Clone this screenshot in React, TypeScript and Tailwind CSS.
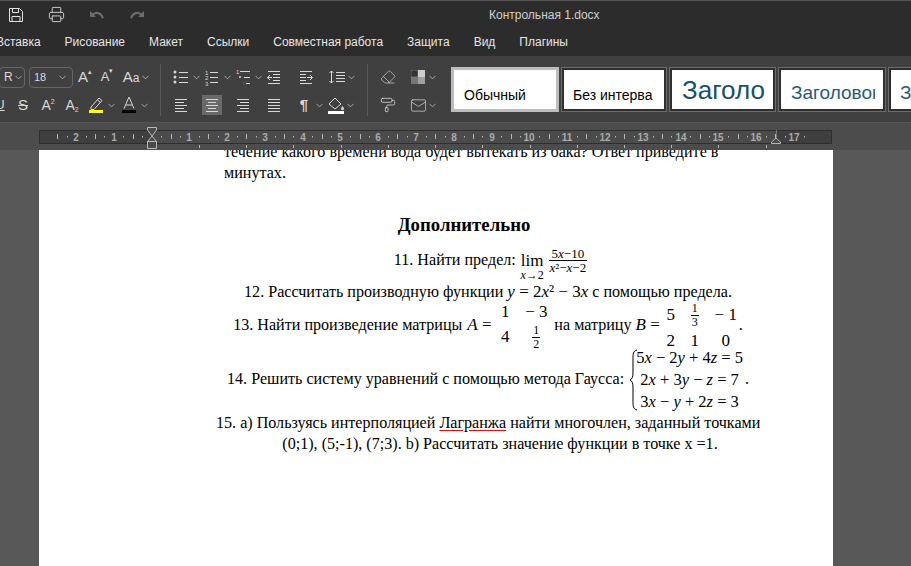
import { ReactNode } from 'react';
import { Printer, Eraser, PaintRoller, Mail, ChevronDown } from 'lucide-react';

const Chev = () => <ChevronDown size={11} strokeWidth={1.5} className="shrink-0 text-[#d0d0d0]" />;

function Ic({ children, w = 18 }: { children: ReactNode; w?: number }) {
  return (
    <svg width={w} height="18" viewBox={`0 0 ${w} 18`} fill="none" stroke="#d8d8d8" strokeWidth="1" className="shrink-0">
      {children}
    </svg>
  );
}

function Lines({ rows }: { rows: number[][] }) {
  return (
    <Ic>
      {rows.map((r, i) => (
        <path key={i} d={`M${r[0]} ${r[2]}.5H${r[1]}`} />
      ))}
    </Ic>
  );
}

const alignLeft = [[3, 15, 3], [3, 12, 6], [3, 15, 9], [3, 12, 12], [3, 15, 15]];
const alignCenter = [[3, 15, 3], [5, 13, 6], [3, 15, 9], [5, 13, 12], [3, 15, 15]];
const alignRight = [[3, 15, 3], [6, 15, 6], [3, 15, 9], [6, 15, 12], [3, 15, 15]];
const justify = [[3, 15, 3], [3, 15, 6], [3, 15, 9], [3, 15, 12], [3, 15, 15]];

function Cell({ w, children, active }: { w: number; children: ReactNode; active?: boolean }) {
  return (
    <div style={{ width: w }} className={`h-5 flex items-center justify-center shrink-0 ${active ? 'bg-[#6a6a6a]' : ''}`}>
      {children}
    </div>
  );
}

function StyleCard({ w, children, selected }: { w: number; children: ReactNode; selected?: boolean }) {
  return (
    <div
      style={{ width: w }}
      className={`h-[45px] shrink-0 bg-white overflow-hidden whitespace-nowrap ${selected ? 'border-[3px] border-[#bdbdbd]' : 'border-[3px] border-[#2f2f2f] outline outline-1 outline-[#6e6e6e] -outline-offset-1'}`}
    >
      {children}
    </div>
  );
}

function Ruler() {
  const nums: [number, string][] = [
    [76, '2'], [114, '1'], [189, '1'], [227, '2'], [265, '3'], [303, '4'], [340, '5'], [378, '6'], [416, '7'],
    [454, '8'], [492, '9'], [529, '10'], [567, '11'], [605, '12'], [643, '13'], [681, '14'], [718, '15'], [756, '16'], [794, '17'],
  ];
  const ticks: { x: number; long: boolean }[] = [];
  for (let i = -10; i < 70; i++) {
    const x = 151.7 + i * 9.45;
    if (x < 42 || x > 830) continue;
    const m = ((i % 4) + 4) % 4;
    if (m === 0) continue;
    ticks.push({ x, long: m === 2 });
  }
  const tabs = [199, 246, 293, 341, 388, 435, 482, 530, 577, 624, 671, 718, 766];
  return (
    <svg width="911" height="27" viewBox="0 0 911 27" className="block" fontFamily="'Liberation Sans', sans-serif">
      <rect x="39.5" y="7.5" width="792" height="13" fill="#3f3f3f" stroke="#2e2e2e" />
      <rect x="152" y="8" width="624" height="12" fill="#4b4b4b" />
      {ticks.map((t, i) => (
        <path key={i} d={`M${Math.round(t.x)}.5 ${t.long ? 11 : 13}V${t.long ? 16 : 14.5}`} stroke="#b8b8b8" />
      ))}
      {nums.map(([x, n]) => (
        <text key={x} x={x} y="17.5" textAnchor="middle" fontSize="10" fontWeight="700" fill="#aaaaaa">{n}</text>
      ))}
      {tabs.map((x) => (
        <path key={x} d={`M${x}.5 22V25`} stroke="#b8b8b8" />
      ))}
      <path d="M147.5 4.5H156.5V7L152 13L147.5 7ZM152 13L156.5 18.5H147.5Z" fill="#4b4b4b" stroke="#b8b8b8" />
      <rect x="147.5" y="18.5" width="9" height="7" fill="#4b4b4b" stroke="#b8b8b8" />
      <path d="M776 15L771.5 19V20.5H780.5V19Z" fill="#4b4b4b" stroke="#b8b8b8" />
      <path d="M776.5 7V15" stroke="#777" />
    </svg>
  );
}

function Frac({ a, b, size = 'text-[12px]' }: { a: ReactNode; b: ReactNode; size?: string }) {
  return (
    <span className={`inline-flex flex-col items-center align-middle leading-[13px] ${size}`}>
      <span className="px-px">{a}</span>
      <span className="border-t border-black px-px w-full text-center">{b}</span>
    </span>
  );
}

const I = ({ children }: { children: ReactNode }) => <i className="italic">{children}</i>;
const M = ({ children }: { children: ReactNode }) => <span className="text-[17px]">{children}</span>;

export default function App() {
  return (
    <div className="w-[911px] h-[566px] overflow-hidden bg-[#585858] flex flex-col font-['Liberation_Sans',sans-serif]">
      {/* title bar */}
      <div className="h-7 shrink-0 bg-[#2c2c2c] border-t border-[#555] flex items-center text-[#e0e0e0]">
        <svg width="14" height="14" viewBox="0 0 14 14" fill="none" stroke="#e0e0e0" className="ml-[9px] shrink-0">
          <path d="M.5.5H10.5L13.5 3.5V13.5H.5Z" />
          <path d="M3.5.5V4.5H9.5V.5M3 13.5V8.5H11V13.5" />
        </svg>
        <Printer size={17} strokeWidth={1.2} className="ml-[25px] shrink-0" />
        <svg width="16" height="12" viewBox="0 0 16 12" className="ml-[24px] shrink-0" fill="#6c6c6c">
          <path d="M1 2V8H7L4.8 6C7.5 4 11 5 13 9.5L15 9C13 3 8 1 3.5 4.3Z" />
        </svg>
        <svg width="16" height="12" viewBox="0 0 16 12" className="ml-[24px] shrink-0" fill="#6c6c6c">
          <path d="M15 2V8H9L11.2 6C8.5 4 5 5 3 9.5L1 9C3 3 8 1 12.5 4.3Z" />
        </svg>
        <span className="ml-[344px] text-[12px] text-[#cfcfcf]">Контрольная 1.docx</span>
      </div>
      {/* tabs */}
      <div className="h-7 shrink-0 bg-[#2c2c2c] flex items-center gap-6 -ml-[4px] text-[12px] text-[#e6e6e6] whitespace-nowrap">
        <span>Вставка</span>
        <span>Рисование</span>
        <span>Макет</span>
        <span>Ссылки</span>
        <span>Совместная работа</span>
        <span>Защита</span>
        <span>Вид</span>
        <span>Плагины</span>
      </div>
      {/* toolbar */}
      <div className="h-[67px] shrink-0 bg-[#404040] border-b border-[#555] flex items-start overflow-hidden text-[#d8d8d8]">
        <div className="w-[160px] shrink-0 mt-[11px] flex flex-col gap-2 h-12">
          <div className="flex items-center h-5">
            <div className="w-[26px] h-[21px] border border-[#666] rounded-sm -ml-px flex items-center pl-[4px] shrink-0 text-[12px] overflow-hidden">
              <span>R</span><Chev />
            </div>
            <div className="w-[44px] h-[21px] ml-[4px] border border-[#666] rounded-sm flex items-center justify-between pl-1 pr-1 text-[11px] shrink-0">
              <span>18</span><Chev />
            </div>
            <div className="ml-[1px] flex items-center">
              <Cell w={22}><span className="text-[15px]">A<sup className="text-[7px] -top-2 relative">▴</sup></span></Cell>
              <Cell w={22}><span className="text-[13px]">A<sup className="text-[7px] -top-2 relative">▾</sup></span></Cell>
              <span className="w-[3px]" />
              <Cell w={20}><span className="text-[15px]">A<span className="text-[12px]">a</span></span></Cell>
              <span className="-ml-[1px]"><Chev /></span>
            </div>
          </div>
          <div className="flex items-center h-5">
            <span className="-ml-[6px]"><Cell w={12}><span className="text-[13px] underline">U</span></Cell></span>
            <span className="w-[5px]" />
            <Cell w={24}><span className="text-[15px] line-through">S</span></Cell>
            <span className="w-[1px]" />
            <Cell w={24}><span className="text-[14px]">A<sup className="text-[7px] -top-1.5 relative">2</sup></span></Cell>
            <Cell w={24}><span className="text-[14px]">A<sub className="text-[7px] top-0.5 relative">2</sub></span></Cell>
            <Cell w={24}>
              <Ic>
                <path d="M4 11L12 2L15 4.5L7 13.5H4Z" />
                <path d="M10.5 4L13.5 6.5" />
                <rect x="2" y="14" width="14" height="3" fill="#ffff00" stroke="none" />
              </Ic>
            </Cell>
            <span className="-ml-[2px]"><Chev /></span>
            <span className="w-[1px]" />
            <Cell w={22}>
              <Ic>
                <path d="M4 12.5L9 1L14 12.5M6 9H12" />
                <rect x="2" y="14" width="14" height="3" fill="#000" stroke="none" />
              </Ic>
            </Cell>
            <span className="-ml-[1px]"><Chev /></span>
          </div>
        </div>
        <div className="w-px h-[52px] mt-[8px] bg-[#5a5a5a] shrink-0" />
        <div className="w-[206px] shrink-0 pl-[11px] mt-[11px] flex flex-col gap-2">
          <div className="flex items-center h-5">
            <Cell w={18}>
              <Ic>
                <circle cx="3" cy="4" r="1.5" fill="#d8d8d8" stroke="none" /><circle cx="3" cy="9" r="1.5" fill="#d8d8d8" stroke="none" /><circle cx="3" cy="14" r="1.5" fill="#d8d8d8" stroke="none" />
                <path d="M7 4.5H16M7 9.5H16M7 14.5H16" />
              </Ic>
            </Cell>
            <span className="w-[1px]" />
            <Chev />
            <span className="w-[1px]" />
            <Cell w={18}>
              <Ic>
                <text x="2" y="7" fontSize="6" fill="#d8d8d8" stroke="none">1</text>
                <text x="2" y="12" fontSize="6" fill="#d8d8d8" stroke="none">2</text>
                <text x="2" y="18" fontSize="6" fill="#d8d8d8" stroke="none">3</text>
                <path d="M7 4.5H15M7 9.5H15M7 14.5H15" />
              </Ic>
            </Cell>
            <span className="w-[1px]" />
            <Chev />
            <span className="w-[1px]" />
            <Cell w={18}>
              <Ic>
                <text x="2" y="6" fontSize="6" fill="#d8d8d8" stroke="none">1</text>
                <circle cx="6" cy="9" r="1" fill="#d8d8d8" stroke="none" />
                <text x="9" y="17" fontSize="6" fill="#d8d8d8" stroke="none">:</text>
                <path d="M6 3.5H16M10 9.5H16M12 15.5H16" />
              </Ic>
            </Cell>
            <span className="w-[1px]" />
            <Chev />
            <Cell w={20}>
              <Ic>
                <path d="M3 3.5H15M8 6.5H15M8 9.5H15M8 12.5H15M3 15.5H15M7 9.5H2.5M5 7L2.5 9.5L5 12" />
              </Ic>
            </Cell>
            <span className="w-[12px]" />
            <Cell w={20}>
              <Ic>
                <path d="M3 3.5H15M3 6.5H9M3 9.5H9M3 12.5H9M3 15.5H15M10 9.5H15M13 7L15.5 9.5L13 12" />
              </Ic>
            </Cell>
            <span className="w-[12px]" />
            <Cell w={18}>
              <Ic>
                <path d="M3.5 3V15M1.5 5L3.5 3L5.5 5M1.5 13L3.5 15L5.5 13M8 4.5H17M8 7.5H17M8 10.5H17M8 13.5H17" />
              </Ic>
            </Cell>
            <Chev />
          </div>
          <div className="flex items-center h-5">
            <Cell w={18}><Lines rows={alignLeft} /></Cell>
            <span className="w-[12px]" />
            <Cell w={20} active><Lines rows={alignCenter} /></Cell>
            <span className="w-[11px]" />
            <Cell w={20}><Lines rows={alignRight} /></Cell>
            <span className="w-[11px]" />
            <Cell w={20}><Lines rows={justify} /></Cell>
            <span className="w-[11px]" />
            <Cell w={18}><span className="text-[15px] font-bold text-[#d8d8d8]">¶</span></Cell>
            <span className="w-[1px]" />
            <Chev />
            <span className="w-[2px]" />
            <Cell w={18}>
              <Ic>
                <path d="M2 8L8 2L14 8L8 13Z" />
                <path d="M15.5 10C14.5 11.5 14 12 14 13C14 14.5 17 14.5 17 13C17 12 16.5 11.5 15.5 10Z" fill="#d8d8d8" stroke="none" />
                <rect x="1" y="15" width="16" height="3" fill="#fff" stroke="none" />
              </Ic>
            </Cell>
            <Chev />
          </div>
        </div>
        <div className="w-px h-[52px] mt-[8px] bg-[#5a5a5a] shrink-0" />
        <div className="w-[83px] shrink-0 pl-[11px] mt-[11px] flex flex-col gap-2">
          <div className="flex items-center h-5">
            <Cell w={18}><Eraser size={16} strokeWidth={1} /></Cell>
            <span className="w-[12px]" />
            <Cell w={18}>
              <svg width="14" height="14" viewBox="0 0 14 14">
                <rect x="0" y="0" width="7" height="7" fill="#333" stroke="#999" strokeWidth="0.6" />
                <rect x="7" y="0" width="7" height="7" fill="#ccc" />
                <rect x="0" y="7" width="7" height="7" fill="#777" />
                <rect x="7" y="7" width="7" height="7" fill="#a0a0a0" />
              </svg>
            </Cell>
            <Chev />
          </div>
          <div className="flex items-center h-5">
            <Cell w={18}><PaintRoller size={16} strokeWidth={1.2} /></Cell>
            <span className="w-[12px]" />
            <Cell w={18}><Mail size={17} strokeWidth={1} /></Cell>
            <Chev />
          </div>
        </div>
        <div className="mt-[11px] flex gap-[2px] shrink-0 text-black">
          <StyleCard w={108} selected>
            <div className="pl-[10px] pt-[15px] text-[14px] leading-5">Обычный</div>
          </StyleCard>
          <StyleCard w={106}>
            <div className="pl-[9px] pt-[15px] text-[14px] leading-5">Без интерва</div>
          </StyleCard>
          <StyleCard w={107}>
            <div className="pl-[10px] pt-[4px] text-[26px] leading-8 text-[#17506e] w-[94px] overflow-hidden">Заголовок 1</div>
          </StyleCard>
          <StyleCard w={108}>
            <div className="pl-[10px] pt-[11px] text-[19px] leading-6 text-[#2a5a78] w-[94px] overflow-hidden">Заголовок 2</div>
          </StyleCard>
          <StyleCard w={40}>
            <div className="pl-[9px] pt-[11px] text-[19px] leading-6 text-[#2a5a78]">Заголовок 3</div>
          </StyleCard>
        </div>
      </div>
      {/* ruler */}
      <div className="h-[27px] shrink-0 bg-[#4c4c4c]">
        <Ruler />
      </div>
      {/* page */}
      <div className="flex-1 min-h-0 pl-[39px]">
        <div className="w-[794px] h-full bg-white overflow-hidden text-black font-['Liberation_Serif',serif] text-[16.1px]">
          <div className="w-[528px] ml-[185px] -mt-[9px]">
            <div className="h-[21px] leading-[21px] whitespace-nowrap">течение какого времени вода будет вытекать из бака? Ответ приведите в</div>
            <div className="h-[21px] leading-[21px]">минутах.</div>
            <div className="mt-[29px] h-[26px] leading-[26px] text-[18.8px] font-bold text-center -ml-[48px]">Дополнительно</div>
            <div className="mt-[4px] h-[36px] flex items-center justify-center gap-[5px] whitespace-nowrap pl-[5px]">
              <span>11. Найти предел:</span>
              <span className="inline-flex flex-col items-center leading-none relative text-[17px]">
                <span>lim</span>
                <span className="absolute top-[17px] text-[12px] leading-3 whitespace-nowrap"><I>x</I>→2</span>
              </span>
              <Frac a={<>5<I>x</I>−10</>} b={<><I>x</I>²−<I>x</I>−2</>} size="text-[13px]" />
            </div>
            <div className="mt-[3px] h-[22px] leading-[22px] text-center whitespace-nowrap">
              12. Рассчитать производную функции <M><I>y</I> = 2<I>x</I>² − 3<I>x</I></M> с помощью предела.
            </div>
            <div className="h-[44px] flex items-center justify-center whitespace-nowrap">
              <span>13. Найти произведение матрицы</span>
              <span className="ml-[5px] w-[27px] text-[17px]"><I>A</I> =</span>
              <span className="ml-[2px] grid grid-cols-[18px_44px] justify-items-center items-center text-[17px]">
                <span className="h-[24px] leading-[24px]">1</span><span className="h-[24px] leading-[24px]">− 3</span>
                <span>4</span><Frac a="1" b="2" />
              </span>
              <span className="-ml-[4px]">на матрицу <M><I>B</I> =</M></span>
              <span className="ml-[1px] grid grid-cols-[20px_28px_34px] justify-items-center items-center relative top-[2px] text-[17px]">
                <span>5</span><Frac a="1" b="3" /><span>− 1</span>
                <span className="h-[24px] leading-[24px]">2</span><span className="h-[24px] leading-[24px]">1</span><span className="h-[24px] leading-[24px]">0</span>
              </span>
              <span className="-ml-[4px]">.</span>
            </div>
            <div className="h-[65px] flex items-center justify-center whitespace-nowrap">
              <span>14. Решить систему уравнений с помощью метода Гаусса:</span>
              <svg width="9" height="62" viewBox="0 0 9 62" fill="none" stroke="black" className="ml-[5px] shrink-0">
                <path d="M8 1C4 2 4 5 4 10V24C4 28 3 30 1 31C3 32 4 34 4 38V52C4 57 4 60 8 61" />
              </svg>
              <span className="flex flex-col items-center leading-[22px] -ml-[2px] text-[16.5px]">
                <span>5<I>x</I> − 2<I>y</I> + 4<I>z</I> = 5</span>
                <span>2<I>x</I> + 3<I>y</I> − <I>z</I> = 7</span>
                <span>3<I>x</I> − <I>y</I> + 2<I>z</I> = 3</span>
              </span>
              <span className="ml-[2px]">.</span>
            </div>
            <div className="h-[21px] leading-[21px] text-center whitespace-nowrap -mx-2">
              15. а) Пользуясь интерполяцией <span className="underline decoration-[#ff0000] underline-offset-2">Лагранжа</span> найти многочлен, заданный точками
            </div>
            <div className="h-[21px] leading-[21px] text-center whitespace-nowrap pl-[24px]">
              (0;1), (5;-1), (7;3). b) Рассчитать значение функции в точке x =1.
            </div>
          </div>
        </div>
      </div>
    </div>
  );
}
